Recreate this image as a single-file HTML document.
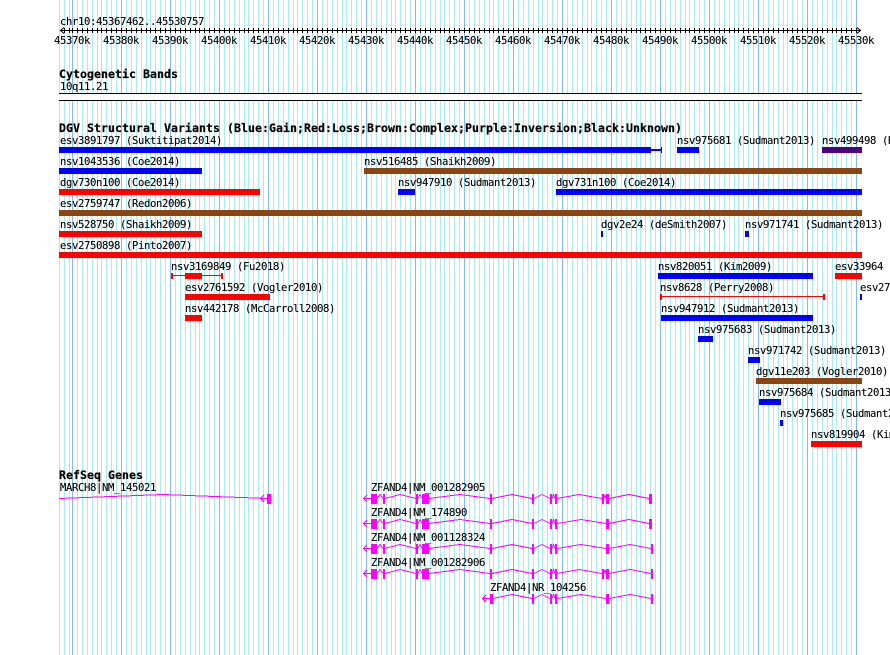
<!DOCTYPE html>
<html><head><meta charset="utf-8"><style>
html,body{margin:0;padding:0;background:#fff}
svg{display:block}
text{font-family:"DejaVu Sans Mono","Liberation Mono",monospace;font-size:10.6px;fill:#000;stroke:#000;stroke-width:.1px;letter-spacing:-0.38px}
text.b{font-weight:bold;font-size:11.6px;letter-spacing:.02px;stroke-width:.2px}
.g{fill:none;stroke:#f0f;stroke-width:1}
.bar{shape-rendering:crispEdges}
</style></head><body>
<svg xmlns="http://www.w3.org/2000/svg" width="890" height="655" viewBox="0 0 890 655">
<defs>
<path id="d" d="M5.5 0V655M10.5 0V655M15.5 0V655M20.5 0V655M25.5 0V655M29.5 0V655M34.5 0V655M39.5 0V655M44.5 0V655"/>
<path id="t" d="M.5 28V33M5.5 28V33M10.5 28V33M15.5 28V33M20.5 28V33M25.5 28V33M29.5 28V33M34.5 28V33M39.5 28V33M44.5 28V33"/>
</defs>
<g shape-rendering="crispEdges" stroke="#a8ecf0" stroke-width="1" fill="none">
<path d="M59.5 0V655M64.5 0V655M69.5 0V655"/>
<use href="#d" x="72"/><use href="#d" x="121"/><use href="#d" x="170"/><use href="#d" x="219"/><use href="#d" x="268"/><use href="#d" x="317"/><use href="#d" x="366"/><use href="#d" x="415"/><use href="#d" x="464"/><use href="#d" x="513"/><use href="#d" x="562"/><use href="#d" x="611"/><use href="#d" x="660"/><use href="#d" x="709"/><use href="#d" x="758"/><use href="#d" x="807"/>
</g>
<path shape-rendering="crispEdges" stroke="#80bcec" stroke-width="1" d="M72.5 0V655M121.5 0V655M170.5 0V655M219.5 0V655M268.5 0V655M317.5 0V655M366.5 0V655M415.5 0V655M464.5 0V655M513.5 0V655M562.5 0V655M611.5 0V655M660.5 0V655M709.5 0V655M758.5 0V655M807.5 0V655M856.5 0V655"/>

<text x="60" y="25">chr10:45367462..45530757</text>
<g shape-rendering="crispEdges" stroke="#000" stroke-width="1" fill="none">
<path d="M60 30.5H861M64.5 28V33M69.5 28V33"/>
<use href="#t" x="72"/><use href="#t" x="121"/><use href="#t" x="170"/><use href="#t" x="219"/><use href="#t" x="268"/><use href="#t" x="317"/><use href="#t" x="366"/><use href="#t" x="415"/><use href="#t" x="464"/><use href="#t" x="513"/><use href="#t" x="562"/><use href="#t" x="611"/><use href="#t" x="660"/><use href="#t" x="709"/><use href="#t" x="758"/><use href="#t" x="807"/>
<path d="M856.5 28V33"/>
</g>
<path fill="none" stroke="#000" d="M64 27.5L60.5 30.5L64 33.5M857 27.5L860.5 30.5L857 33.5"/>
<g text-anchor="middle">
<text x="72" y="44">45370k</text><text x="121" y="44">45380k</text><text x="170" y="44">45390k</text><text x="219" y="44">45400k</text><text x="268" y="44">45410k</text><text x="317" y="44">45420k</text><text x="366" y="44">45430k</text><text x="415" y="44">45440k</text><text x="464" y="44">45450k</text><text x="513" y="44">45460k</text><text x="562" y="44">45470k</text><text x="611" y="44">45480k</text><text x="660" y="44">45490k</text><text x="709" y="44">45500k</text><text x="758" y="44">45510k</text><text x="807" y="44">45520k</text><text x="856" y="44">45530k</text>
</g>

<text class="b" x="59" y="78">Cytogenetic Bands</text>
<text x="60" y="90">10q11.21</text>
<rect x="59" y="93" width="803" height="8" fill="#fff" class="bar"/>
<rect x="59" y="93" width="803" height="1" fill="#000" class="bar"/>
<rect x="59" y="100" width="803" height="1" fill="#000" class="bar"/>

<text class="b" x="59" y="132">DGV Structural Variants (Blue:Gain;Red:Loss;Brown:Complex;Purple:Inversion;Black:Unknown)</text>

<g class="bar">
<rect x="59" y="147" width="592" height="6" fill="#00f"/><rect x="651" y="149" width="10" height="2" fill="#00f"/><rect x="661" y="147" width="1" height="6" fill="#00f"/>
<rect x="677" y="147" width="22" height="6" fill="#00f"/>
<rect x="822" y="147" width="40" height="6" fill="#4b0082"/>
<rect x="59" y="168" width="143" height="6" fill="#00f"/>
<rect x="364" y="168" width="498" height="6" fill="#8b4513"/>
<rect x="59" y="189" width="201" height="6" fill="#f00"/>
<rect x="398" y="189" width="17" height="6" fill="#00f"/>
<rect x="556" y="189" width="306" height="6" fill="#00f"/>
<rect x="59" y="210" width="803" height="6" fill="#8b4513"/>
<rect x="59" y="231" width="143" height="6" fill="#f00"/>
<rect x="601" y="231" width="2" height="6" fill="#00f"/>
<rect x="745" y="231" width="4" height="6" fill="#00f"/>
<rect x="59" y="252" width="803" height="6" fill="#f00"/>
<rect x="171" y="273" width="2" height="6" fill="#f00"/><rect x="171" y="275" width="51" height="1" fill="#f00"/><rect x="185" y="273" width="17" height="6" fill="#f00"/><rect x="221" y="273" width="2" height="6" fill="#f00"/>
<rect x="658" y="273" width="155" height="6" fill="#00f"/>
<rect x="835" y="273" width="27" height="6" fill="#f00"/>
<rect x="185" y="294" width="85" height="6" fill="#f00"/>
<rect x="660" y="294" width="2" height="6" fill="#f00"/><rect x="660" y="296" width="164" height="1" fill="#f00"/><rect x="823" y="294" width="2" height="6" fill="#f00"/>
<rect x="860" y="294" width="2" height="6" fill="#00f"/>
<rect x="185" y="315" width="17" height="6" fill="#f00"/>
<rect x="661" y="315" width="152" height="6" fill="#00f"/>
<rect x="698" y="336" width="15" height="6" fill="#00f"/>
<rect x="748" y="357" width="12" height="6" fill="#00f"/>
<rect x="756" y="378" width="106" height="6" fill="#8b4513"/>
<rect x="759" y="399" width="22" height="6" fill="#00f"/>
<rect x="780" y="420" width="3" height="6" fill="#00f"/>
<rect x="811" y="441" width="51" height="6" fill="#f00"/>
</g>

<text x="60" y="144">esv3891797 (Suktitipat2014)</text>
<text x="677" y="144">nsv975681 (Sudmant2013)</text>
<text x="822" y="144">nsv499498 (Kim2009)</text>
<text x="60" y="165">nsv1043536 (Coe2014)</text>
<text x="364" y="165">nsv516485 (Shaikh2009)</text>
<text x="60" y="186">dgv730n100 (Coe2014)</text>
<text x="398" y="186">nsv947910 (Sudmant2013)</text>
<text x="556" y="186">dgv731n100 (Coe2014)</text>
<text x="60" y="207">esv2759747 (Redon2006)</text>
<text x="60" y="228">nsv528750 (Shaikh2009)</text>
<text x="601" y="228">dgv2e24 (deSmith2007)</text>
<text x="745" y="228">nsv971741 (Sudmant2013)</text>
<text x="60" y="249">esv2750898 (Pinto2007)</text>
<text x="171" y="270">nsv3169849 (Fu2018)</text>
<text x="658" y="270">nsv820051 (Kim2009)</text>
<text x="835" y="270">esv33964</text>
<text x="185" y="291">esv2761592 (Vogler2010)</text>
<text x="660" y="291">nsv8628 (Perry2008)</text>
<text x="860" y="291">esv2761592</text>
<text x="185" y="312">nsv442178 (McCarroll2008)</text>
<text x="661" y="312">nsv947912 (Sudmant2013)</text>
<text x="698" y="333">nsv975683 (Sudmant2013)</text>
<text x="748" y="354">nsv971742 (Sudmant2013)</text>
<text x="756" y="375">dgv11e203 (Vogler2010)</text>
<text x="759" y="396">nsv975684 (Sudmant2013)</text>
<text x="780" y="417">nsv975685 (Sudmant2013)</text>
<text x="811" y="438">nsv819904 (Kim2009)</text>

<text class="b" x="59" y="479">RefSeq Genes</text>
<text x="60" y="491">MARCH8|NM_145021</text>
<text x="371" y="491">ZFAND4|NM_001282905</text>
<text x="371" y="516">ZFAND4|NM_174890</text>
<text x="371" y="541">ZFAND4|NM_001128324</text>
<text x="371" y="566">ZFAND4|NM_001282906</text>
<text x="490" y="591">ZFAND4|NR_104256</text>

<g shape-rendering="crispEdges">
<path class="g" d="M59 498.5L163 494.5L267 498.5M264 498.5H267M264 495L260.5 498.5L264 502"/>
<rect x="267" y="494" width="4" height="10" fill="#f0f"/>
</g>
<g shape-rendering="crispEdges">
<path class="g" d="M363.5 498.5H371M367 495L363.5 498.5L367 502M377 498.5L380 494.5L383 498.5M385 498.5L400 494.5L416 498.5M418 498.5L420 494.5L422 498.5M429 498.5L460 494.5L490 498.5M492 498.5L512 494.5L532 498.5M534 498.5L542 494.5L550 498.5M552 498.5L553.5 494.5L555 498.5M557 498.5L579 494.5L602 498.5M604 498.5L605 494.5L606 498.5M609 498.5L629 494.5L649 498.5"/>
<path fill="#f0f" d="M371 494h6v10h-6zM383 494h2v10h-2zM416 494h2v10h-2zM422 494h7v10h-7zM490 494h2v10h-2zM532 494h2v10h-2zM550 494h2v10h-2zM555 494h2v10h-2zM602 494h2v10h-2zM606 494h3v10h-3zM649 494h3v10h-3z"/>
<path class="g" d="M363.5 523.5H371M367 520L363.5 523.5L367 527M377 523.5L380 519.5L383 523.5M385 523.5L400 519.5L416 523.5M418 523.5L420 519.5L422 523.5M429 523.5L460 519.5L490 523.5M492 523.5L512 519.5L532 523.5M534 523.5L542 519.5L550 523.5M552 523.5L553.5 519.5L555 523.5M557 523.5L581 519.5L606 523.5M609 523.5L629 519.5L649 523.5"/>
<path fill="#f0f" d="M371 519h6v10h-6zM383 519h2v10h-2zM416 519h2v10h-2zM422 519h7v10h-7zM490 519h2v10h-2zM532 519h2v10h-2zM550 519h2v10h-2zM555 519h2v10h-2zM606 519h3v10h-3zM649 519h3v10h-3z"/>
<path class="g" d="M363.5 548.5H371M367 545L363.5 548.5L367 552M377 548.5L380 544.5L383 548.5M385 548.5L400 544.5L416 548.5M418 548.5L420 544.5L422 548.5M429 548.5L460 544.5L490 548.5M492 548.5L512 544.5L532 548.5M534 548.5L542 544.5L550 548.5M552 548.5L553.5 544.5L555 548.5M557 548.5L581 544.5L606 548.5M609 548.5L630 544.5L651 548.5"/>
<path fill="#f0f" d="M371 544h6v10h-6zM383 544h2v10h-2zM416 544h2v10h-2zM422 544h7v10h-7zM490 544h2v10h-2zM532 544h2v10h-2zM550 544h2v10h-2zM555 544h2v10h-2zM606 544h3v10h-3zM651 544h2v10h-2z"/>
<path class="g" d="M363.5 573.5H371M367 570L363.5 573.5L367 577M377 573.5L380 569.5L383 573.5M385 573.5L400 569.5L416 573.5M418 573.5L420 569.5L422 573.5M429 573.5L460 569.5L490 573.5M492 573.5L512 569.5L532 573.5M534 573.5L542 569.5L550 573.5M552 573.5L553.5 569.5L555 573.5M557 573.5L579 569.5L602 573.5M604 573.5L605 569.5L606 573.5M609 573.5L630 569.5L651 573.5"/>
<path fill="#f0f" d="M371 569h6v10h-6zM383 569h2v10h-2zM416 569h2v10h-2zM422 569h7v10h-7zM490 569h2v10h-2zM532 569h2v10h-2zM550 569h2v10h-2zM555 569h2v10h-2zM602 569h2v10h-2zM606 569h3v10h-3zM651 569h2v10h-2z"/>
<path class="g" d="M482.5 598.5H490M486 595L482.5 598.5L486 602M493 598.5L512 594.5L532 598.5M534 598.5L542 594.5L550 598.5M552 598.5L553.5 594.5L555 598.5M557 598.5L581 594.5L606 598.5M609 598.5L630 594.5L651 598.5"/>
<path fill="#f0f" d="M490 594h3v10h-3zM532 594h2v10h-2zM550 594h2v10h-2zM555 594h2v10h-2zM606 594h3v10h-3zM651 594h2v10h-2z"/>
</g>
</svg>
</body></html>
